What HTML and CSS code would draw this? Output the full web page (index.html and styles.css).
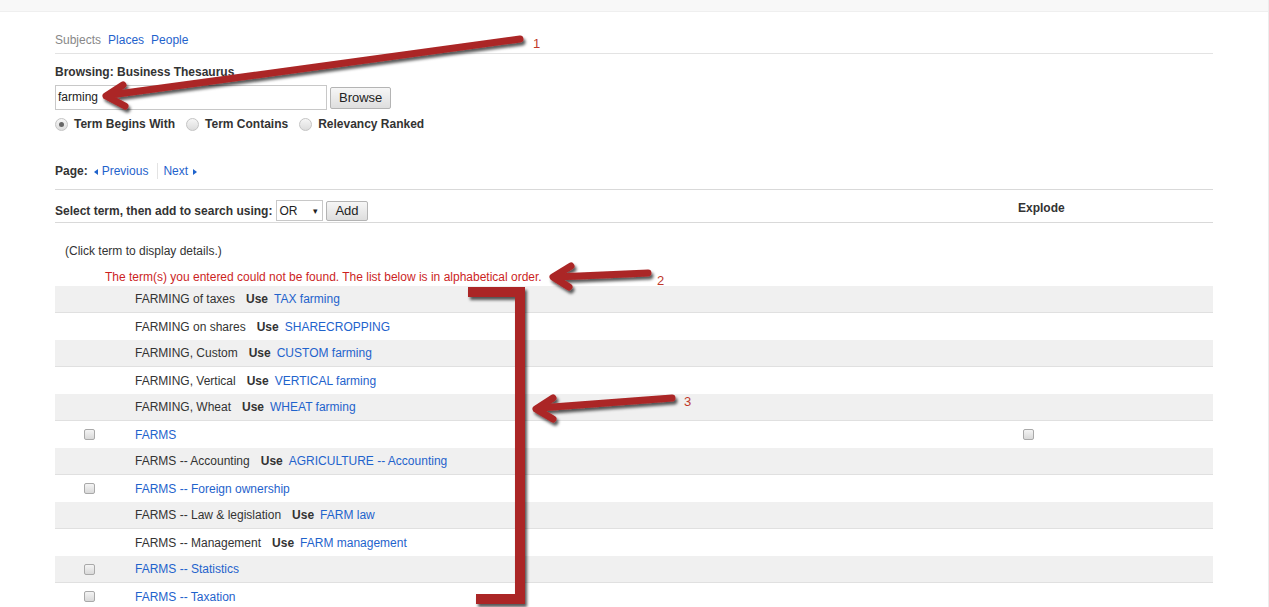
FILE: index.html
```html
<!DOCTYPE html>
<html lang="en">
<head>
<meta charset="utf-8">
<title>Browse Business Thesaurus</title>
<link rel="stylesheet" href="styles.css">
</head>
<body>
<div class="frame">
  <div class="topbar"></div>
  <div class="page">
    <div class="tabs"><span class="muted">Subjects</span><a>Places</a><a>People</a></div>
    <div class="browsing">Browsing: Business Thesaurus</div>
    <div class="search">
      <div class="input">farming</div>
      <span class="btn">Browse</span>
    </div>
    <div class="radios">
      <span class="radio on"></span><span class="rlabel">Term Begins With</span>
      <span class="radio"></span><span class="rlabel">Term Contains</span>
      <span class="radio"></span><span class="rlabel">Relevancy Ranked</span>
    </div>
    <div class="pager">
      <b>Page:</b>
      <a class="prev"><span class="tri-left"></span>Previous</a>
      <span class="sep"></span>
      <a class="next">Next<span class="tri-right"></span></a>
    </div>
    <div class="addbar">
      <b>Select term, then add to search using:</b>
      <span class="select">OR<span class="caret">▾</span></span>
      <span class="btn small">Add</span>
      <b class="explode">Explode</b>
    </div>
    <div class="hint">(Click term to display details.)</div>
    <div class="notfound">The term(s) you entered could not be found. The list below is in alphabetical order.</div>
    <div class="rows">
      <div class="row alt"><span></span><span class="term">FARMING of taxes<b class="use">Use</b><a>TAX farming</a></span><span></span></div>
      <div class="row"><span></span><span class="term">FARMING on shares<b class="use">Use</b><a>SHARECROPPING</a></span><span></span></div>
      <div class="row alt"><span></span><span class="term">FARMING, Custom<b class="use">Use</b><a>CUSTOM farming</a></span><span></span></div>
      <div class="row"><span></span><span class="term">FARMING, Vertical<b class="use">Use</b><a>VERTICAL farming</a></span><span></span></div>
      <div class="row alt"><span></span><span class="term">FARMING, Wheat<b class="use">Use</b><a>WHEAT farming</a></span><span></span></div>
      <div class="row"><span class="cb"></span><span class="term"><a>FARMS</a></span><span class="cb ex"></span></div>
      <div class="row alt"><span></span><span class="term">FARMS -- Accounting<b class="use">Use</b><a>AGRICULTURE -- Accounting</a></span><span></span></div>
      <div class="row"><span class="cb"></span><span class="term"><a>FARMS -- Foreign ownership</a></span><span></span></div>
      <div class="row alt"><span></span><span class="term">FARMS -- Law &amp; legislation<b class="use">Use</b><a>FARM law</a></span><span></span></div>
      <div class="row"><span></span><span class="term">FARMS -- Management<b class="use">Use</b><a>FARM management</a></span><span></span></div>
      <div class="row alt"><span class="cb"></span><span class="term"><a>FARMS -- Statistics</a></span><span></span></div>
      <div class="row"><span class="cb"></span><span class="term"><a>FARMS -- Taxation</a></span><span></span></div>
    </div>
  </div>
</div>
<svg class="annot" width="1269" height="607" viewBox="0 0 1269 607">
  <defs>
    <filter id="sh" x="-10%" y="-10%" width="130%" height="130%">
      <feDropShadow dx="2" dy="3" stdDeviation="1.4" flood-color="#000" flood-opacity="0.65"/>
    </filter>
  </defs>
  <g class="mark" filter="url(#sh)">
    <path d="M520 39 L110 95"/>
    <path d="M123 85 L106 96 L125 106"/>
    <path d="M648 273 L556 277"/>
    <path d="M571 266 L553 277 L569 287"/>
    <path d="M672 398 L539 408"/>
    <path d="M553 398 L536 409 L553 419"/>
    <path class="bracket" d="M468 292 L520 292 L520 599 L476 599"/>
  </g>
  <text class="num" x="533" y="48">1</text>
  <text class="num" x="657" y="285">2</text>
  <text class="num" x="684" y="406">3</text>
</svg>
</body>
</html>
```

FILE: styles.css
```css
html, body {
  margin: 0;
  padding: 0;
}
body {
  position: relative;
  font-family: "Liberation Sans", Arial, sans-serif;
  font-size: 12px;
  color: #333;
  background: #fff;
}
a {
  color: #1f63cc;
  text-decoration: none;
}
.frame {
  min-height: 607px;
  border-right: 1px solid #ececec;
  box-sizing: border-box;
}
.topbar {
  height: 11px;
  background: #f8f8f8;
  border-bottom: 1px solid #efefef;
}
.page {
  padding: 0 55px;
}
.tabs {
  display: flex;
  gap: 7px;
  padding: 20px 0 5px;
  line-height: 16px;
  border-bottom: 1px solid #e3e3e3;
}
.muted {
  color: #888;
}
.browsing {
  margin-top: 10px;
  line-height: 16px;
  font-weight: bold;
}
.search {
  display: flex;
  align-items: center;
  gap: 3px;
  margin-top: 5px;
}
.input {
  width: 268px;
  height: 23px;
  border: 1px solid #c8c8c8;
  box-sizing: content-box;
  padding-left: 2px;
  line-height: 23px;
  font-size: 12px;
  color: #222;
}
.btn {
  display: inline-block;
  height: 20px;
  line-height: 20px;
  padding: 0 8px;
  font-size: 13px;
  color: #222;
  border: 1px solid #b4b4b4;
  border-radius: 2px;
  background: linear-gradient(#f6f6f6, #dedede);
}
.radios {
  display: flex;
  align-items: center;
  margin-top: 6px;
  height: 16px;
}
.radio {
  width: 11px;
  height: 11px;
  border: 1px solid #c4c4c4;
  border-radius: 50%;
  background: linear-gradient(#f6f6f6, #dcdcdc);
  position: relative;
  margin-right: 6px;
}
.radio.on::after {
  content: "";
  position: absolute;
  left: 3px;
  top: 3px;
  width: 5px;
  height: 5px;
  border-radius: 50%;
  background: #666;
}
.rlabel {
  font-weight: bold;
  margin-right: 11px;
}
.pager {
  display: flex;
  align-items: center;
  margin-top: 31px;
  line-height: 16px;
  padding-bottom: 10px;
  border-bottom: 1px solid #d9d9d9;
}
.pager b {
  margin-right: 6px;
}
.tri-left, .tri-right {
  display: inline-block;
  width: 0;
  height: 0;
  border-top: 3.5px solid transparent;
  border-bottom: 3.5px solid transparent;
  vertical-align: 0;
}
.tri-left {
  border-right: 4px solid #1f63cc;
  margin-right: 4px;
}
.tri-right {
  border-left: 4px solid #1f63cc;
  margin-left: 5px;
}
.sep {
  width: 1px;
  height: 16px;
  background: #e3e3e3;
  margin: 0 5px 0 9px;
}
.addbar {
  display: flex;
  align-items: center;
  padding: 10px 0 1px;
  border-bottom: 1px solid #d9d9d9;
}
.select {
  display: inline-flex;
  justify-content: space-between;
  align-items: center;
  width: 39px;
  height: 19px;
  padding: 0 4px 0 2px;
  margin: 0 3px 0 4px;
  border: 1px solid #c8c8c8;
  background: #fff;
  color: #222;
  font-size: 12px;
}
.caret {
  font-size: 9px;
}
.btn.small {
  height: 18px;
  line-height: 18px;
  font-size: 13px;
}
.explode {
  margin-left: auto;
  margin-bottom: 5px;
  width: 195px;
}
.hint {
  margin-top: 20px;
  padding-left: 10px;
  line-height: 16px;
}
.notfound {
  margin-top: 10px;
  margin-bottom: 1px;
  padding-left: 50px;
  line-height: 16px;
  color: #cc1f1f;
}
.row {
  display: grid;
  grid-template-columns: 80px 1fr 196px;
  align-items: center;
  height: 27px;
  box-sizing: border-box;
}
.row.alt {
  background: #f0f0f0;
  border-bottom: 1px solid #e0e0e0;
}
.term {
  white-space: nowrap;
}
.use {
  margin: 0 6px 0 11px;
}
.cb {
  width: 9px;
  height: 9px;
  margin-left: 29px;
  border: 1px solid #a9a9a9;
  border-radius: 2px;
  background: linear-gradient(#f4f4f4, #d9d9d9);
}
.cb.ex {
  margin-left: 6px;
}
.annot {
  position: absolute;
  left: 0;
  top: 0;
  pointer-events: none;
}
.mark path {
  fill: none;
  stroke: #ab2626;
  stroke-width: 7;
  stroke-linecap: round;
  stroke-linejoin: round;
}
.mark path.bracket {
  stroke-width: 10;
  stroke-linecap: butt;
  stroke-linejoin: miter;
}
.num {
  font-family: "Liberation Sans", Arial, sans-serif;
  font-size: 13px;
  fill: #c0392b;
}
```
